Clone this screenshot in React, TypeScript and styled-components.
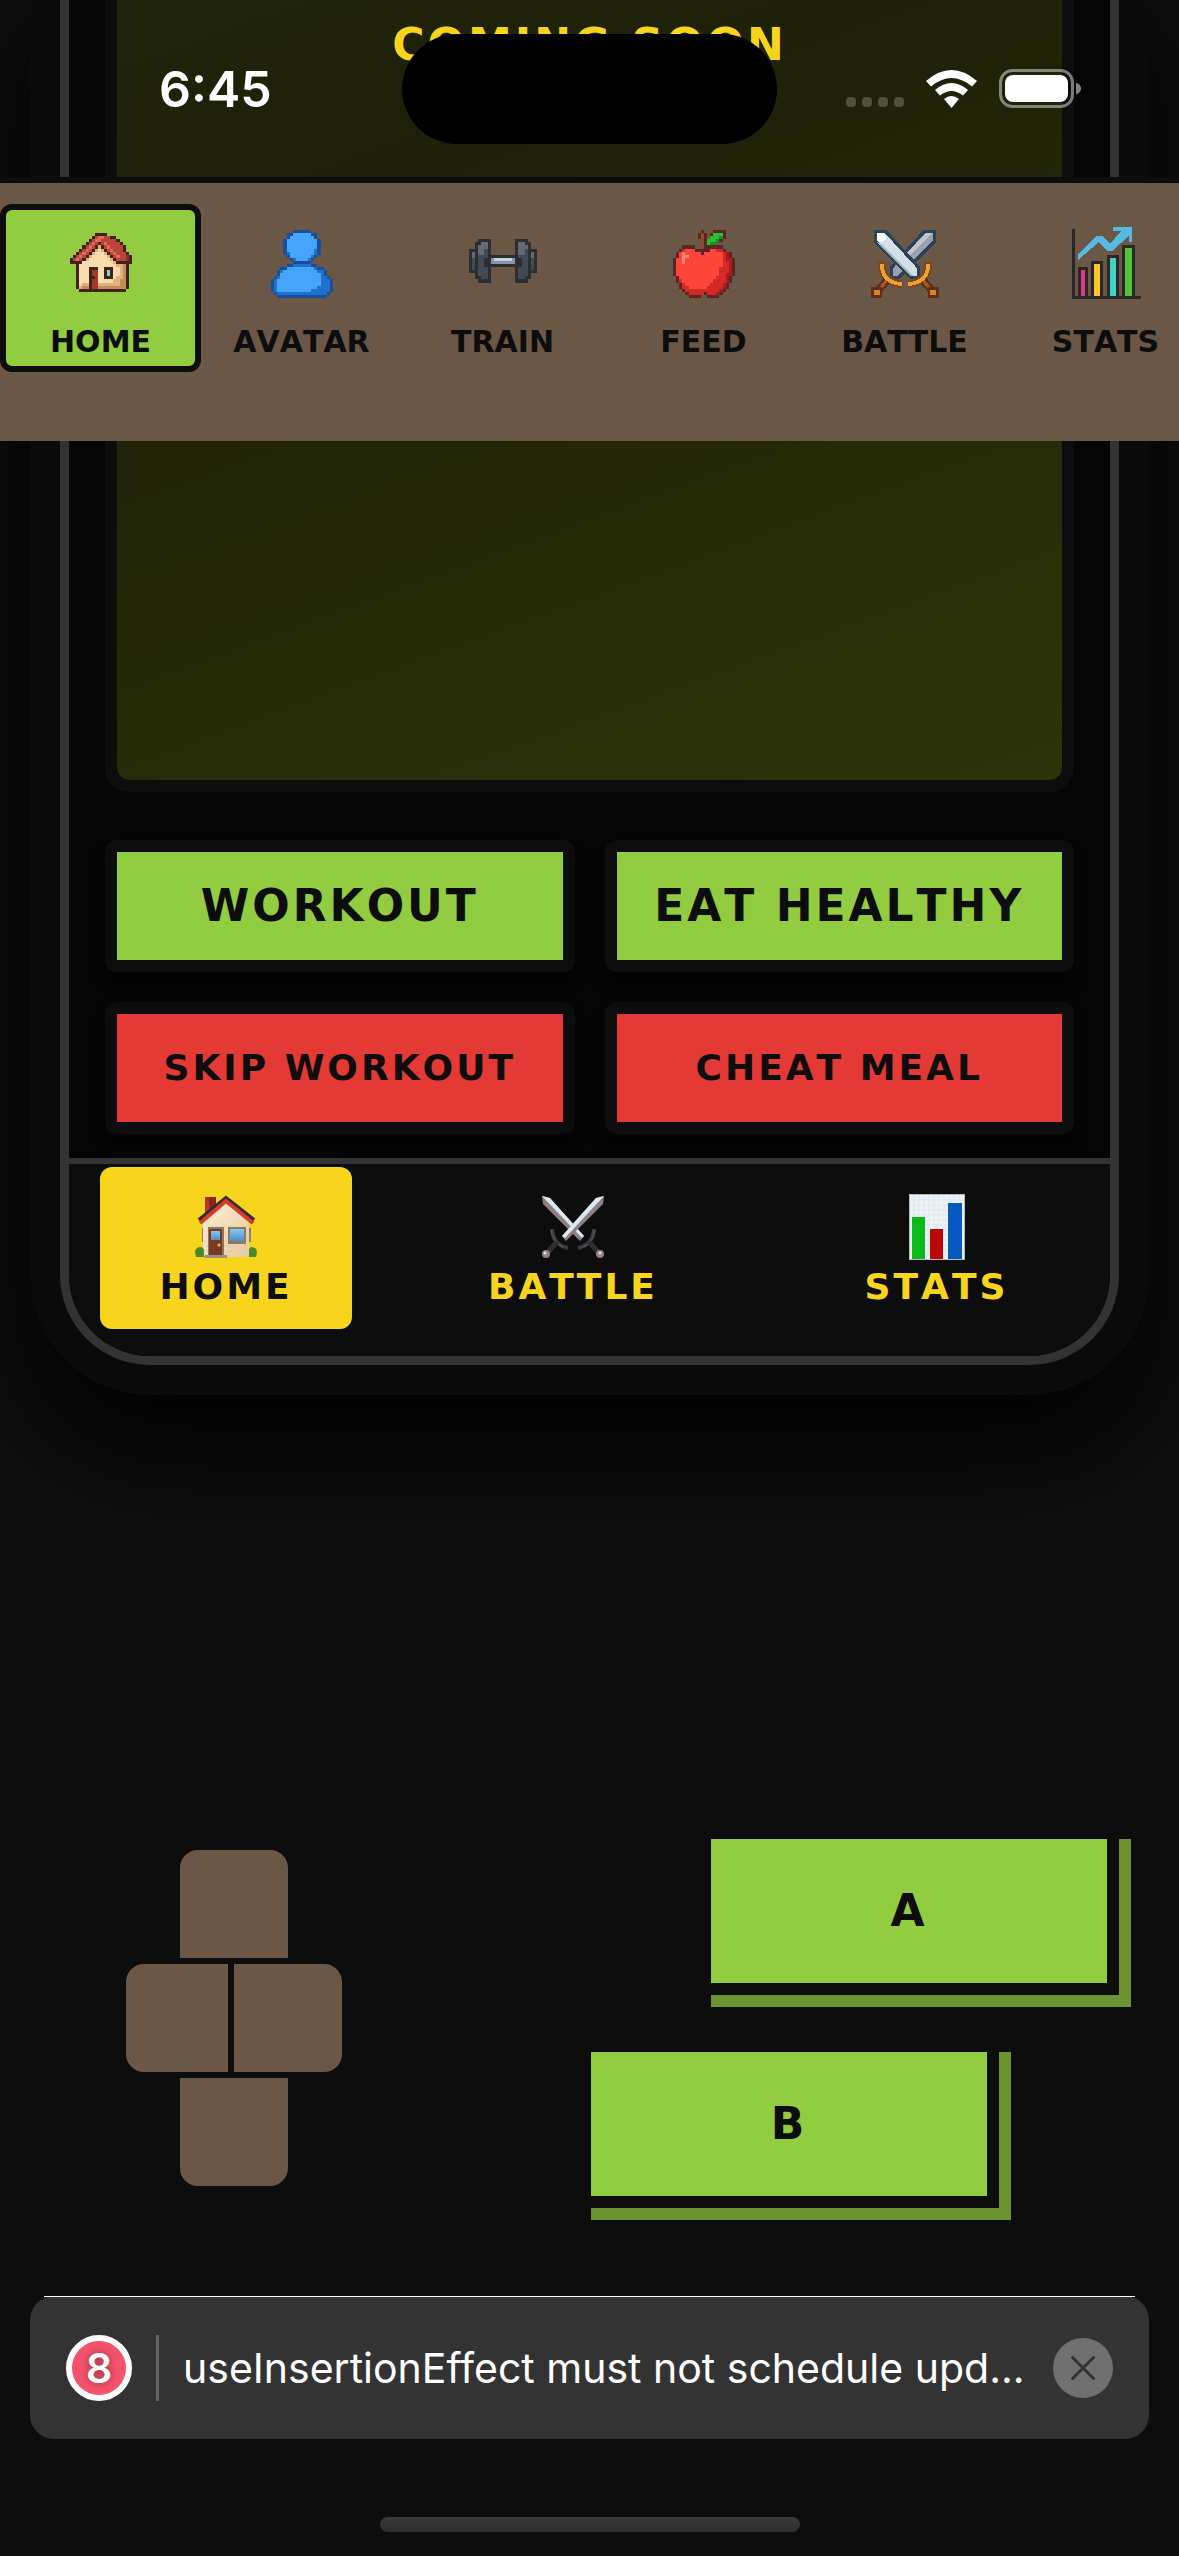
import React from "react";
import styled, { createGlobalStyle, css } from "styled-components";

const ink = "#0d0d0d";
const earth = "#6a5745";
const grass = "#92cc41";
const danger = "#e53935";
const gold = "#f7d51d";
const rim = "#333333";

const Global = createGlobalStyle`
  *, *::before, *::after { box-sizing: border-box; }
  html, body { margin: 0; background: ${ink}; }
  body { font-family: Inter, "Liberation Sans", sans-serif; color: #fff; }
  button { font: inherit; margin: 0; padding: 0; border: 0; }
`;

const arcade = css`
  font-family: "DejaVu Sans", sans-serif;
  font-weight: 700;
  font-kerning: none;
  white-space: nowrap;
`;
const arcadeLarge = css`
  ${arcade}
  font-size: 44px;
  line-height: 48px;
  letter-spacing: 3px;
`;
const arcadeMedium = css`
  ${arcade}
  font-size: 36px;
  line-height: 36px;
  letter-spacing: 3px;
`;
const arcadeSmall = css`
  ${arcade}
  font-size: 30px;
  line-height: 36px;
`;

const Page = styled.div`
  position: relative;
  min-height: 100vh;
  overflow: hidden;
`;

/* ---------- status bar ---------- */
const StatusBar = styled.header`
  position: absolute;
  inset: 0 0 auto 0;
  z-index: 3;
  height: 177px;
  display: grid;
  grid-template-columns: 1fr 375px 1fr;
  align-items: center;
`;
const Clock = styled.time`
  padding-left: 159px;
  font-size: 50px;
  line-height: 60px;
  font-weight: 600;
`;
const Island = styled.div`
  height: 110px;
  border-radius: 55px;
  background: #000;
`;
const StatusIcons = styled.div`
  display: flex;
  justify-content: flex-end;
  align-items: center;
  gap: 22px;
  padding-right: 98px;
`;
const Dots = styled.div`
  display: flex;
  gap: 6px;
  padding-top: 26px;
`;
const Dot = styled.i`
  width: 10px;
  height: 10px;
  border-radius: 4px;
  background: rgba(255, 255, 255, 0.22);
`;

/* ---------- top navigation ---------- */
const TopNav = styled.nav`
  position: absolute;
  inset: 177px 0 auto 0;
  z-index: 2;
  height: 264px;
  padding-top: 21px;
  border-top: 6px solid ${ink};
  background: ${earth};
  display: flex;
  align-items: flex-start;
  overflow: hidden;
`;
const TopTab = styled.button<{ $active?: boolean }>`
  ${arcadeSmall}
  flex: 0 0 201px;
  display: flex;
  flex-direction: column;
  align-items: center;
  gap: 12px;
  padding: 6px 0;
  border: 6px solid ${(p) => (p.$active ? ink : "transparent")};
  border-radius: 12px;
  background: ${(p) => (p.$active ? grass : "transparent")};
  color: ${ink};
  svg { display: block; width: 96px; height: 96px; }
`;

/* ---------- handheld ---------- */
const Handheld = styled.main`
  margin: 0 60px;
  border: 9px solid ${rim};
  border-top: 0;
  border-radius: 0 0 90px 90px;
  background: #050505;
  box-shadow: 0 0 0 30px #0a0a0a, 0 54px 108px 24px #000;
`;
const Bezel = styled.div`
  padding: 0 36px 24px;
`;
const Screen = styled.section`
  height: 792px;
  padding-top: 21px;
  border: 12px solid ${ink};
  border-top: 0;
  border-radius: 0 0 24px 24px;
  background: linear-gradient(160deg, #20240a 0%, #1e2008 25%, #2c3309 100%) padding-box;
  text-align: center;
`;
const ScreenTitle = styled.h1`
  ${arcadeLarge}
  margin: 0;
  color: ${gold};
`;
const Actions = styled.div`
  display: grid;
  grid-template-columns: 1fr 1fr;
  gap: 30px;
  margin-top: 48px;
`;
const ActionButton = styled.button<{ $bad?: boolean }>`
  ${(p) => (p.$bad ? arcadeMedium : arcadeLarge)}
  height: 132px;
  border: 12px solid ${ink};
  border-radius: 12px;
  background: ${(p) => (p.$bad ? danger : grass)};
  box-shadow: 0 12px 12px rgba(0, 0, 0, 0.5);
  color: ${ink};
`;
const Dock = styled.nav`
  display: flex;
  justify-content: space-around;
  padding: 3px 0 27px;
  border-top: 6px solid ${rim};
  border-radius: 0 0 81px 81px;
  background: ${ink};
`;
const DockTab = styled.button<{ $active?: boolean; $chars: number }>`
  ${arcadeMedium}
  width: ${(p) => p.$chars * 33 + 120}px;
  display: flex;
  flex-direction: column;
  align-items: center;
  gap: 9px;
  padding: 27px 0 24px;
  border-radius: 12px;
  background: ${(p) => (p.$active ? gold : "transparent")};
  color: ${(p) => (p.$active ? ink : gold)};
  svg { display: block; width: 66px; height: 66px; }
`;

/* ---------- controls ---------- */
const Controls = styled.section`
  display: flex;
  justify-content: space-between;
  align-items: flex-start;
  margin-top: 474px;
  padding: 0 48px 0 120px;
`;
const Pad = styled.div`
  display: flex;
  flex-direction: column;
  align-items: center;
  padding-top: 5px;
`;
const PadKey = styled.button<{ $corners: string }>`
  width: 120px;
  height: 120px;
  border: 6px solid ${ink};
  border-radius: ${(p) => p.$corners};
  background: ${earth};
`;
const PadRow = styled.div`
  display: flex;
  margin: -6px 0;
  ${PadKey}:last-child { margin-left: -12px; }
`;
const Pair = styled.div`
  display: flex;
  flex-direction: column;
  gap: 45px;
`;
const RoundKey = styled.button<{ $inset?: boolean }>`
  ${arcadeLarge}
  width: 420px;
  height: 168px;
  padding: 0 24px 24px 0;
  margin-left: ${(p) => (p.$inset ? "0" : "120px")};
  background: ${grass};
  box-shadow: inset -12px -12px 0 #6b932f, inset -24px -24px 0 ${ink};
  color: ${ink};
`;

/* ---------- warning toast ---------- */
const Toast = styled.aside`
  position: absolute;
  inset: auto 30px 117px 30px;
  height: 143px;
  display: flex;
  align-items: center;
  gap: 24px;
  padding: 0 36px;
  border-radius: 24px;
  background: ${rim};
  &::before {
    content: "";
    position: absolute;
    inset: 0 14px auto 14px;
    height: 1px;
    background: #fff;
  }
`;
const Count = styled.span`
  flex: none;
  width: 66px;
  height: 66px;
  border: 6px solid #fff;
  border-radius: 50%;
  background: #f5536b;
  text-align: center;
  font-size: 41px;
  line-height: 54px;
  font-weight: 600;
  text-shadow: 0 0 9px rgba(0, 0, 0, 0.4);
`;
const Rule = styled.span`
  flex: none;
  width: 3px;
  height: 66px;
  background: #666;
`;
const Message = styled.span`
  flex: 1;
  min-width: 0;
  white-space: nowrap;
  font-size: 41px;
  line-height: 54px;
`;
const Dismiss = styled.button`
  flex: none;
  width: 60px;
  height: 60px;
  border-radius: 50%;
  background: #707070;
  svg { display: block; }
`;
const HomeIndicator = styled.div`
  position: absolute;
  bottom: 24px;
  left: 50%;
  width: 420px;
  height: 15px;
  margin-left: -210px;
  border-radius: 8px;
  background: linear-gradient(#393939, #2d2d2d);
`;

/* ---------- pixel art ---------- */
type Sprite = { x: number; y: number; colors: Record<string, string>; rows: string[] };

function PixelArt({ x, y, colors, rows }: Sprite) {
  const cells: React.ReactNode[] = [];
  rows.forEach((row, r) => {
    let c = 0;
    while (c < row.length) {
      const ch = row[c];
      let end = c + 1;
      while (row[end] === ch) end++;
      if (colors[ch]) {
        cells.push(<rect key={`${r}-${c}`} x={x + c} y={y + r} width={end - c} height={1} fill={colors[ch]} />);
      }
      c = end;
    }
  });
  return (
    <svg viewBox="0 0 31 31" shapeRendering="crispEdges" aria-hidden="true">
      {cells}
    </svg>
  );
}

const cottage: Sprite = {
  x: 5.5,
  y: 5.5,
  colors: { o: "#43221c", r: "#b8453a", l: "#e26a58", w: "#f9dcae", s: "#e3b27c", d: "#a03a2c", b: "#8cc6df", n: "#c48d58", D: "#8a302a" },
  rows: [
    "........oooo........",
    ".......orllrroo.....",
    "......orllrrrrro....",
    ".....orlrorlrrrro...",
    "....orlrosorlrrrro..",
    "...orlroswsorlrrro..",
    "..orlroswwwsorlrrro.",
    ".orlroswwwwwsorlrrDo",
    "orlroswwwwwwwsorrrDo",
    "oooowwwwwwwwwwsooooo",
    "..owwwwwwwwwwwwssno.",
    "..owwwooowwooowwsno.",
    "..owwwoddwwobowwsno.",
    "..owwwoddwwobowwsno.",
    "..owwwoodwwooowssno.",
    "..owwwoddwwwwwssnno.",
    "..owssoddsssssssnno.",
    "..osnnoddnnnnnnnnno.",
    "...ooooooooooooooo..",
  ],
};

const person: Sprite = {
  x: 5.5,
  y: 4.5,
  colors: { o: "#1b4f95", B: "#45a5fb", D: "#1f72cb" },
  rows: [
    ".......oooooo.......",
    ".....ooBBBBBBoo.....",
    ".....oBBBBBBBBo.....",
    "....oBBBBBBBBBBo....",
    "....oBBBBBBBBBBo....",
    "....oBBBBBBBBBBo....",
    "....oBBBBBBBBBDo....",
    "....oDBBBBBBBBDo....",
    ".....oBBBBBBBDo.....",
    "......oDBBBBDo......",
    ".......oooooo.......",
    ".....ooDDDDDDoo.....",
    "...ooBBBBBBBBBDoo...",
    "..oDBBBBBBBBBBBDDo..",
    "..oBBBBBBBBBBBBBDo..",
    ".oDBBBBBBBBBBBBBDDo.",
    "oDBBBBBBBBBBBBBBDDDo",
    "oDBBBBBBBBBBBBBBDDDo",
    "oDBBBBBBBBBBBBBDDDDo",
    "oDBBBBBBBBBBBDDDDDDo",
    ".oDDDDDDDDDDDDDDDDo.",
    "..oooooooooooooooo..",
  ],
};

const dumbbell: Sprite = {
  x: 4.5,
  y: 7.5,
  colors: { o: "#2c2e30", g: "#646973", d: "#434a56", b: "#8496a8", L: "#c3d3e2" },
  rows: [
    "...oooo........oooo...",
    "..ooggo........oggoo..",
    "..ogggo........ogggo..",
    "oooggdo........oggdooo",
    "ogoggdo........oggdogo",
    "ogodddoooooooooodddogo",
    "ododdoobLLLLLLbooddodo",
    "ododdoobbbbbbbbooddodo",
    "ododdooooooooooooddodo",
    "ododddo........odddodo",
    "ooodddo........odddooo",
    "..odddo........odddo..",
    "..ooddo........oddoo..",
    "...oooo........oooo...",
  ],
};

const apple: Sprite = {
  x: 5.5,
  y: 4.5,
  colors: { o: "#5c2423", s: "#8c4a2c", G: "#25c02c", g: "#119422", R: "#fb4639", D: "#d42a27", K: "#a91d22", h: "#fb8277" },
  rows: [
    ".........o...oooo...",
    "........oso.oGGGo...",
    "........oso.GGGgo...",
    ".........soGGGgo....",
    ".........soGgg......",
    "...oooo..soooooo....",
    "..oDRRRoooooRRDDo...",
    ".oRhRRRRRoRRRRRRDKo.",
    ".oRhhRRRRRRRRRRRDKo.",
    "oRRhRRRRRRRRRRRRDKKo",
    "oRRhRRRRRRRRRRRRDDKo",
    "oRRRRRRRRRRRRRRRDDKo",
    "oRRRRRRRRRRRRRRDDDKo",
    "oRRRRRRRRRRRRRRDDDKo",
    "oRRRRRRRRRRRRRRDDKKo",
    ".oRRRRRRRRRRRRDDDKo.",
    ".oDRRRRRRRRRRDDDDKo.",
    "..oDRRRRRRRRDDDDKo..",
    "..oDDRRRRRRDDDDDKo..",
    "...oDDDDDDDDDDDKo...",
    "....oDDDDDoDDDKo....",
    ".....oooo..oooo.....",
  ],
};

const RetroSwords = () => (
  <svg viewBox="-4.5 -4.5 31 31" shapeRendering="crispEdges" aria-hidden="true">
    <path d="M21 0h-4L6 12v4h3L21 4z" fill="#2b4356" />
    <path d="M20 1h-2.500L7 12.500V15h1.500L20 3.500z" fill="#9aa0ae" />
    <path d="M20 1h-2L10 9l1 1z" fill="#c0c5cf" />
    <path d="M1 0h4l11 12v4h-3L1 4z" fill="#2b4356" />
    <path d="M2 1h2.500L15 12.500V15h-1.500L2 3.500z" fill="#d3e0e8" />
    <path d="M2 1h2l1 2-2 1-1-1z" fill="#ffffff" />
    <path d="M4 5l10 10h-1L2 4z" fill="#a6b7c4" />
    <g fill="none">
      <path d="M3.500 10.500q0 6.500 6.500 7M18.500 10.500q0 6.500-6.500 7" stroke="#7d4620" strokeWidth="2.600" />
      <path d="M3.500 11q0 6 6.500 6.500M18.500 11q0 6-6.500 6.500" stroke="#eda12f" strokeWidth="1.200" />
      <path d="M5 16.500L1.500 20.500M17 16.500l3.500 4" stroke="#5f3018" strokeWidth="2.600" />
      <path d="M5 16.500L2 20M17 16.500l3 3.500" stroke="#a65a20" strokeWidth="1" />
    </g>
    <path d="M0 18.500h3.500V22H0zM18.500 18.500H22V22h-3.500z" fill="#5f3018" />
    <path d="M1 19.300h2V21H1zM19 19.300h2V21h-2z" fill="#d9822b" />
  </svg>
);

const RetroChart = () => (
  <svg viewBox="0 0 96 96" shapeRendering="crispEdges" aria-hidden="true">
    <g fill="#2a2826">
      <path d="M14 13h3v67h66v3H14z" />
      <path d="M20 51h10v30H20zM33 45h12v36H33zM49 39h12v42H49zM64 29h13v52H64z" />
    </g>
    <path d="M23 54h4v26h-4z" fill="#dc3a8e" />
    <path d="M36 48h6v32h-6z" fill="#fbca22" />
    <path d="M52 42h6v38h-6z" fill="#3fd5c6" />
    <path d="M67 32h7v48h-7z" fill="#57c53d" />
    <path d="M20 44v-6l19-18h5l8 8 11-13h-8v-4h19v15h-3v-6L54 35h-5l-8-9z" fill="#55bbe2" />
  </svg>
);

/* ---------- glossy dock icons ---------- */
const HouseIcon = () => (
  <svg viewBox="0 0 66 66" aria-hidden="true">
    <defs>
      <linearGradient id="wall" x1="0" x2="1" y2="1">
        <stop offset="0" stopColor="#fff0d2" />
        <stop offset="1" stopColor="#e6c9a0" />
      </linearGradient>
      <linearGradient id="pane" x2="0" y2="1">
        <stop stopColor="#86c8f2" />
        <stop offset="1" stopColor="#4d8fcd" />
      </linearGradient>
    </defs>
    <path d="M12 3h11v18H12z" fill="#8e2321" />
    <path d="M12 3h4v18h-4z" fill="#b8352f" />
    <path d="M9 34h3v14H9zM55 34h3v14h-3z" fill="#8d8069" />
    <path d="M10 29L33 7l23 22v34H10z" fill="url(#wall)" />
    <path d="M12 32h42M12 37h42M12 42h42M12 47h42M12 52h42M12 57h42" stroke="#e3caa4" strokeWidth="0.500" />
    <path d="M6 26L33 4l28 22" fill="none" stroke="#372b2a" strokeWidth="4" />
    <path d="M7 29L33 7l27 22" fill="none" stroke="#d63a31" strokeWidth="4" />
    <path d="M15 33h16v30H15z" fill="#8e775b" />
    <path d="M16 35h13v26H16z" fill="#7a3925" />
    <path d="M18 37h9v9h-9z" fill="url(#pane)" />
    <circle cx="26" cy="51" r="1.500" fill="#f1bd55" />
    <path d="M35 33h18v17H35z" fill="#907a5e" />
    <path d="M37 35h14v12H37z" fill="url(#pane)" />
    <path d="M12 61h22v3H11z" fill="#9b9183" />
    <path d="M3 63q-3-9 4-10 4 0 4 4v6zM63 63q3-9-4-10-3 0-3 4v6z" fill="#4b8a2c" />
  </svg>
);

const SwordsIcon = () => (
  <svg viewBox="0 0 66 66" aria-hidden="true">
    <path d="M2 2l8 2 34 38-4 5L3 10z" fill="#8f7f84" />
    <path d="M2 2l8 2 34 38-2 2z" fill="#d9eaf5" />
    <path d="M64 2l-8 2-34 38 4 5L63 10z" fill="#8f7f84" />
    <path d="M64 2l-8 2-34 38 3 2z" fill="#d9eaf5" />
    <path d="M12 35q1 16 16 19M54 35q-1 16-16 19" fill="none" stroke="#3b3b3b" strokeWidth="4" />
    <path d="M11 36q2 13 12 17M55 36q-2 13-12 17" fill="none" stroke="#5b5b5b" strokeWidth="1" />
    <path d="M7 59l10-11M59 59L49 48" stroke="#2b3037" strokeWidth="5" />
    <circle cx="6" cy="60" r="4" fill="#957f84" />
    <circle cx="60" cy="60" r="4" fill="#957f84" />
    <circle cx="5" cy="59" r="1.500" fill="#dfe4ea" />
    <circle cx="60" cy="59" r="1.500" fill="#dfe4ea" />
  </svg>
);

const ChartIcon = () => (
  <svg viewBox="0 0 66 66" aria-hidden="true">
    <path d="M5 0h56v66H5z" fill="#aebbc5" />
    <path d="M6 1h54v64H6z" fill="#edf3f8" />
    <path
      d="M10 1v64M15 1v64M20 1v64M25 1v64M30 1v64M35 1v64M40 1v64M45 1v64M50 1v64M55 1v64M6 6h54M6 11h54M6 16h54M6 21h54M6 26h54M6 31h54M6 36h54M6 41h54M6 46h54M6 51h54M6 56h54M6 61h54"
      stroke="#d9e2ea"
      strokeWidth="0.700"
    />
    <path d="M8 23h13v42H8z" fill="#08bb1a" />
    <path d="M26 35h13v30H26z" fill="#b90808" />
    <path d="M44 9h14v56H44z" fill="#0759c0" />
  </svg>
);

const Wifi = () => (
  <svg width="51" height="38" viewBox="0 0 51 38" aria-hidden="true">
    <path d="M0 11q25.500-22 51 0l-5 5.500q-20.500-17-41 0z" fill="#fff" />
    <path d="M9 20q16.500-14 33 0l-5 5.500q-11.500-9-23 0z" fill="#fff" />
    <path d="M18 29q7.500-6 15 0l-7.500 9z" fill="#fff" />
  </svg>
);

const Battery = () => (
  <svg width="82" height="39" viewBox="0 0 82 39" aria-hidden="true">
    <rect x="1.500" y="1.500" width="72" height="36" rx="12" fill="none" stroke="#fff" strokeOpacity="0.45" strokeWidth="3" />
    <rect x="6" y="6" width="63" height="27" rx="8" fill="#fff" />
    <path d="M77 13.500q5 2 5 6t-5 6z" fill="#fff" fillOpacity="0.5" />
  </svg>
);

const topTabs = [
  { label: "HOME", icon: <PixelArt {...cottage} /> },
  { label: "AVATAR", icon: <PixelArt {...person} /> },
  { label: "TRAIN", icon: <PixelArt {...dumbbell} /> },
  { label: "FEED", icon: <PixelArt {...apple} /> },
  { label: "BATTLE", icon: <RetroSwords /> },
  { label: "STATS", icon: <RetroChart /> },
];

const dockTabs = [
  { label: "HOME", icon: <HouseIcon /> },
  { label: "BATTLE", icon: <SwordsIcon /> },
  { label: "STATS", icon: <ChartIcon /> },
];

export default function App() {
  return (
    <Page>
      <Global />
      <StatusBar>
        <Clock>6:45</Clock>
        <Island />
        <StatusIcons>
          <Dots>
            <Dot />
            <Dot />
            <Dot />
            <Dot />
          </Dots>
          <Wifi />
          <Battery />
        </StatusIcons>
      </StatusBar>

      <TopNav aria-label="Sections">
        {topTabs.map((tab, i) => (
          <TopTab key={tab.label} type="button" $active={i === 0}>
            {tab.icon}
            {tab.label}
          </TopTab>
        ))}
      </TopNav>

      <Handheld>
        <Bezel>
          <Screen>
            <ScreenTitle>COMING SOON</ScreenTitle>
          </Screen>
          <Actions>
            <ActionButton type="button">WORKOUT</ActionButton>
            <ActionButton type="button">EAT HEALTHY</ActionButton>
            <ActionButton type="button" $bad>SKIP WORKOUT</ActionButton>
            <ActionButton type="button" $bad>CHEAT MEAL</ActionButton>
          </Actions>
        </Bezel>
        <Dock aria-label="Handheld menu">
          {dockTabs.map((tab, i) => (
            <DockTab key={tab.label} type="button" $active={i === 0} $chars={tab.label.length}>
              {tab.icon}
              {tab.label}
            </DockTab>
          ))}
        </Dock>
      </Handheld>

      <Controls>
        <Pad>
          <PadKey type="button" aria-label="Up" $corners="24px 24px 0 0" />
          <PadRow>
            <PadKey type="button" aria-label="Left" $corners="24px 0 0 24px" />
            <PadKey type="button" aria-label="Right" $corners="0 24px 24px 0" />
          </PadRow>
          <PadKey type="button" aria-label="Down" $corners="0 0 24px 24px" />
        </Pad>
        <Pair>
          <RoundKey type="button">A</RoundKey>
          <RoundKey type="button" $inset>B</RoundKey>
        </Pair>
      </Controls>

      <Toast role="status">
        <Count>8</Count>
        <Rule />
        <Message>useInsertionEffect must not schedule upd...</Message>
        <Dismiss type="button" aria-label="Dismiss">
          <svg width="60" height="60" viewBox="0 0 60 60" aria-hidden="true">
            <path d="M19.500 19.500l21 21M40.500 19.500l-21 21" stroke="#333" strokeWidth="3" strokeLinecap="round" />
          </svg>
        </Dismiss>
      </Toast>
      <HomeIndicator />
    </Page>
  );
}
